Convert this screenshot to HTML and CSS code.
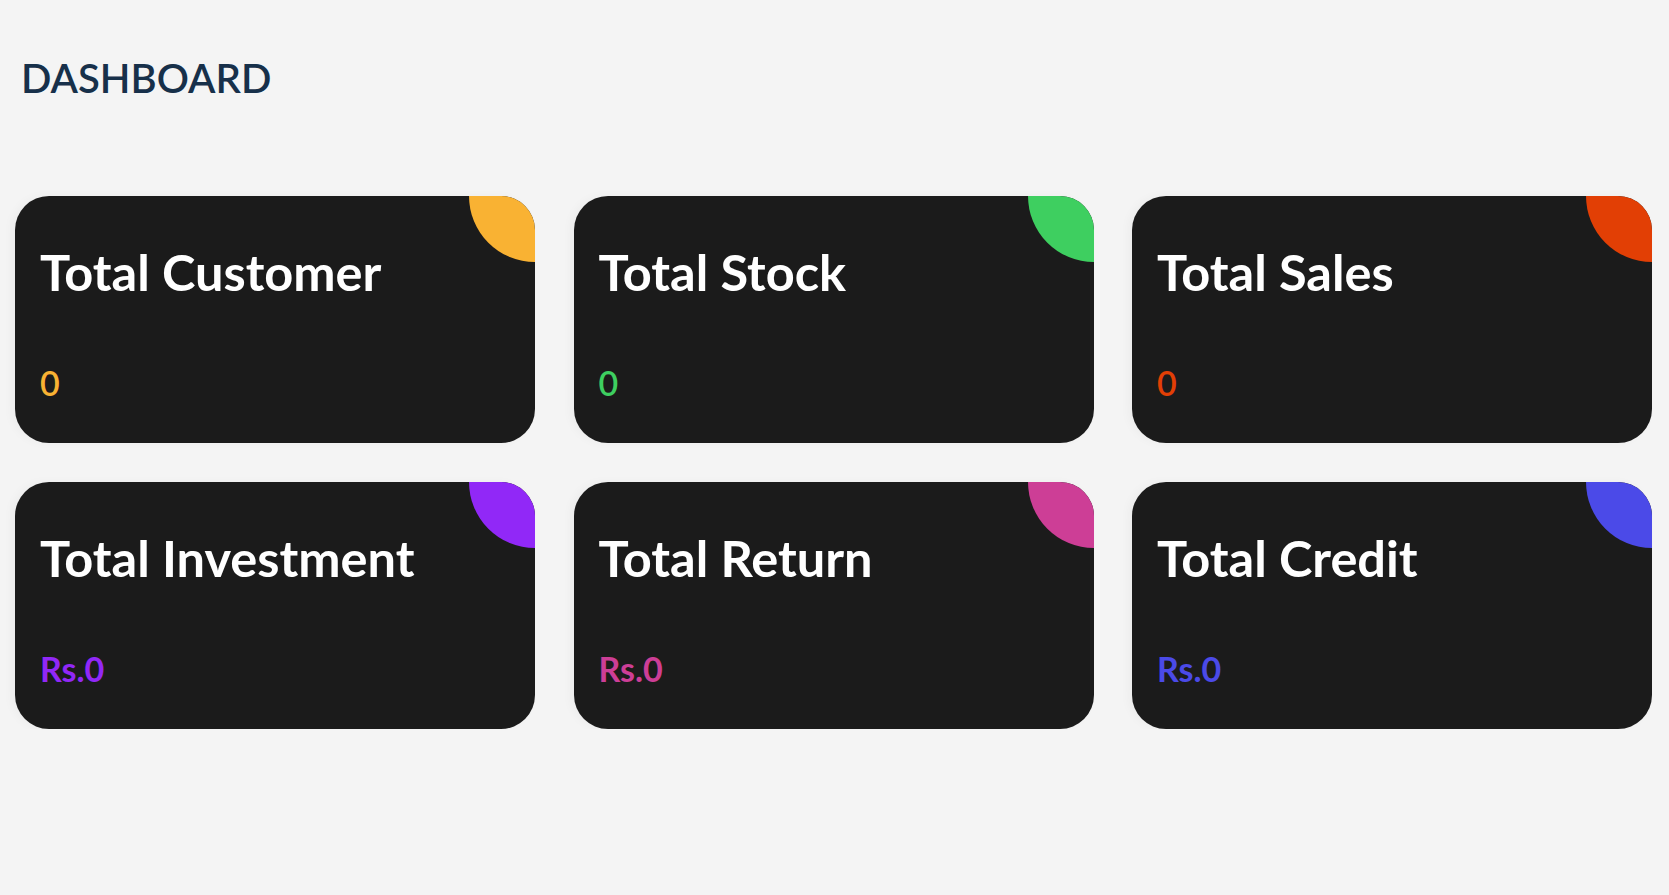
FILE: index.html
```html
<!DOCTYPE html>
<html lang="en">
<head>
<meta charset="utf-8">
<title>Dashboard</title>
<link rel="stylesheet" href="styles.css">
</head>
<body>
<main class="page">
  <h1 class="page-title">DASHBOARD</h1>
  <section class="cards">
    <div class="card card-orange">
      <h2 class="card-title">Total Customer</h2>
      <p class="card-value">0</p>
    </div>
    <div class="card card-green">
      <h2 class="card-title">Total Stock</h2>
      <p class="card-value">0</p>
    </div>
    <div class="card card-red">
      <h2 class="card-title">Total Sales</h2>
      <p class="card-value">0</p>
    </div>
    <div class="card card-purple">
      <h2 class="card-title">Total Investment</h2>
      <p class="card-value card-value-money">Rs.0</p>
    </div>
    <div class="card card-pink">
      <h2 class="card-title">Total Return</h2>
      <p class="card-value card-value-money">Rs.0</p>
    </div>
    <div class="card card-blue">
      <h2 class="card-title">Total Credit</h2>
      <p class="card-value card-value-money">Rs.0</p>
    </div>
  </section>
</main>
</body>
</html>
```

FILE: styles.css
```css
* { box-sizing: border-box; }

html, body {
  margin: 0;
  padding: 0;
  background: #f4f4f4;
  font-family: Lato, "Noto Sans", "Liberation Sans", sans-serif;
}

.page {
  padding: 0 17px 0 15px;
}

.page-title {
  margin: 0;
  padding: 54px 0 0 6px;
  font-size: 40px;
  line-height: 48px;
  font-weight: 600;
  color: #17304a;
  letter-spacing: 0;
}

.cards {
  margin-top: 94px;
  display: grid;
  grid-template-columns: repeat(3, 1fr);
  column-gap: 38.5px;
  row-gap: 38.5px;
}

.card {
  position: relative;
  overflow: hidden;
  height: 247px;
  background: #1b1b1b;
  border-radius: 34px;
  padding: 46px 25px 0 25px;
  box-shadow: -4px 0 10px rgba(0, 0, 0, 0.03);
}

.card::before {
  content: "";
  position: absolute;
  top: -66px;
  right: -66px;
  width: 132px;
  height: 132px;
  border-radius: 50%;
  background: var(--accent);
}

.card-orange { --accent: #f9b233; }
.card-green  { --accent: #3ecf60; }
.card-red    { --accent: #e23f05; }
.card-purple { --accent: #9128f7; }
.card-pink   { --accent: #cd3e96; }
.card-blue   { --accent: #4b4ae8; }

.card-title {
  margin: 0;
  font-size: 50.5px;
  line-height: 60px;
  font-weight: 700;
  color: #ffffff;
}

.card-value {
  margin: 60px 0 0 0;
  font-size: 34px;
  line-height: 41px;
  font-weight: 600;
  color: var(--accent);
}

.card-value-money {
  font-weight: 700;
}
```
